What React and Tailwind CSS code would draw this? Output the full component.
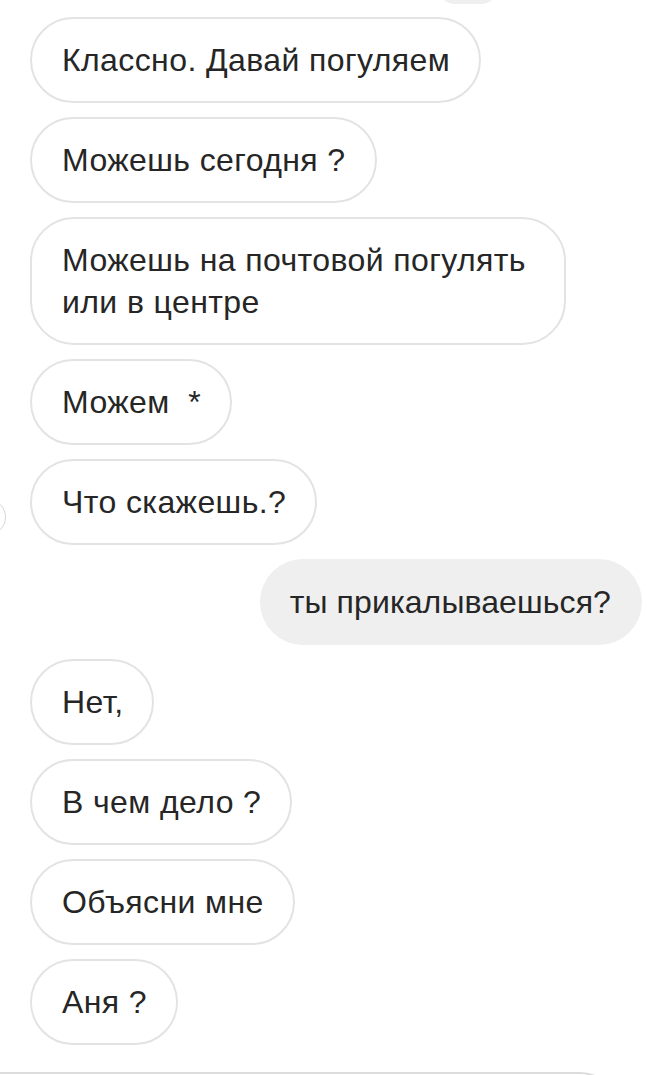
import React from 'react';

const messages = [
  { text: 'Классно. Давай погуляем' },
  { text: 'Можешь сегодня ?' },
  { text: 'Можешь на почтовой погулять\nили в центре', wide: true },
  { text: 'Можем\u00a0\u00a0*' },
  { text: 'Что скажешь.?', avatar: true },
  { text: 'ты прикалываешься?', mine: true },
  { text: 'Нет,' },
  { text: 'В чем дело ?' },
  { text: 'Объясни мне' },
  { text: 'Аня ?' },
];

const Bubble = ({ text, mine, avatar, wide }) => {
  if (mine) {
    return (
      <div className="flex justify-end">
        <div className="rounded-[44px] bg-[#efefef] pl-[30px] pr-[31px] py-[22px] leading-[42px] tracking-[0.1px]">
          {text}
        </div>
      </div>
    );
  }
  return (
    <div className="relative flex justify-start">
      {avatar && (
        <div className="absolute left-[-60px] top-[40px] h-[36px] w-[36px] rounded-full border border-[#d6d6d6]" />
      )}
      <div className={`whitespace-pre-line rounded-[44px] border-2 border-[#e3e3e3] bg-white pl-[30px] py-[20px] leading-[42px] ${wide ? 'pr-[38px]' : 'pr-[29px]'}`}>
        {text}
      </div>
    </div>
  );
};

export default function App() {
  return (
    <div className="relative h-[1075px] w-[664px] overflow-hidden bg-white text-[32px] tracking-[0.4px] text-[#262626] font-['Liberation_Sans',Arial,sans-serif]">
      <div className="absolute left-[438px] top-[-30px] h-[34px] w-[60px] rounded-full bg-[#efefef]" />
      <div className="flex flex-col gap-[14px] pl-[30px] pr-[22px] pt-[17px]">
        {messages.map((m, i) => (
          <Bubble key={i} {...m} />
        ))}
      </div>
      <div className="mt-[27px] h-[40px] w-[620px] rounded-tr-[40px] border-t-2 border-r-2 border-[#dcdcdc]" />
    </div>
  );
}
